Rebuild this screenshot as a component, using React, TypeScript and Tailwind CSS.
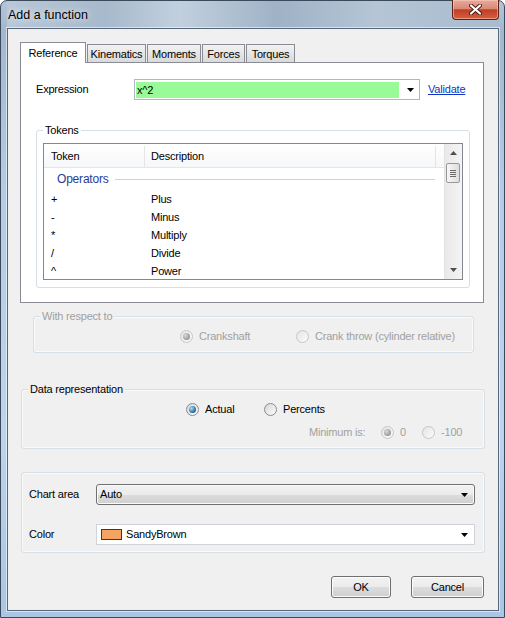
import React from "react";

const TABS = [
  { label: "Reference", w: "w-[66px]", active: true },
  { label: "Kinematics", w: "w-[59px]" },
  { label: "Moments", w: "w-[54px]" },
  { label: "Forces", w: "w-[43px]" },
  { label: "Torques", w: "w-[49px]" },
];

const OPERATORS = [
  { token: "+", desc: "Plus" },
  { token: "-", desc: "Minus" },
  { token: "*", desc: "Multiply" },
  { token: "/", desc: "Divide" },
  { token: "^", desc: "Power" },
];

function Radio({ checked, disabled }: { checked?: boolean; disabled?: boolean }) {
  return (
    <span
      className={`flex h-[13px] w-[13px] shrink-0 items-center justify-center rounded-full border ${
        disabled
          ? "border-[#c6c6c6] bg-[linear-gradient(135deg,#e4e4e4,#fbfbfb)]"
          : "border-[#8a8b8c] bg-[linear-gradient(135deg,#d6d6d6,#fdfdfd)]"
      }`}
    >
      {checked && (
        <span
          className={`h-[7px] w-[7px] rounded-full ${
            disabled
              ? "bg-[radial-gradient(circle_at_35%_35%,#d8d8d8,#7d7d7d)]"
              : "bg-[radial-gradient(circle_at_35%_35%,#a6e1fb,#1a5a91_75%)]"
          }`}
        />
      )}
    </span>
  );
}

function Arrow({ className = "fill-black" }: { className?: string }) {
  return (
    <svg width="7" height="4" viewBox="0 0 7 4" className={className}>
      <path d="M0 0h7L3.5 4z" />
    </svg>
  );
}

export default function App() {
  return (
    <div className="h-[618px] w-[505px] font-['Liberation_Sans',Arial,sans-serif] text-[11px] tracking-[-0.2px] text-black">
      {/* Window frame */}
      <div className="flex h-full w-full flex-col rounded-t-[7px] border border-[#3b4a5b] bg-[linear-gradient(to_bottom,#b4c5d7_0%,#a3b7cc_5%,#b3cbe4_30%,#bcd4ec_70%,#aac6e3_100%)] pl-[6px] pr-[5px] pb-[6px]">
        {/* Title bar */}
        <div className="flex h-[27px] shrink-0 items-start bg-[linear-gradient(to_right,#b9c8d8_0%,#a7b9cc_20%,#c2d0de_35%,#9fb2c6_55%,#b5c5d6_75%,#a9bbce_100%)]">
          <span className="ml-[1px] mt-[7px] text-[12.5px] leading-[15px] tracking-normal [text-shadow:0_0_6px_rgba(255,255,255,0.95)]">
            Add a function
          </span>
          <div className="-mt-px ml-auto flex h-[20px] w-[47px] items-center justify-center rounded-b-[4px] border border-t-0 border-[#5e2318] bg-[linear-gradient(to_bottom,#e8aa9c_0%,#d98a77_45%,#c23d25_52%,#d5613f_100%)] shadow-[inset_0_0_0_1px_rgba(255,210,200,0.5)]">
            <svg width="13" height="11" viewBox="0 0 13 11">
              <path d="M2 1.5l9 8M11 1.5l-9 8" stroke="#4a1a12" strokeWidth="4" strokeLinecap="round" />
              <path d="M2 1.5l9 8M11 1.5l-9 8" stroke="#ffffff" strokeWidth="2.2" strokeLinecap="round" />
            </svg>
          </div>
        </div>

        {/* Client area */}
        <div className="flex h-[583px] w-full flex-col border border-[#56677a] bg-[#f0f0f0] shadow-[0_0_0_1px_rgba(255,255,255,0.55)]">
          {/* Tab strip */}
          <div className="ml-[12px] mt-[13px] flex h-[21px] items-end gap-[1px]">
            {TABS.map((t) =>
              t.active ? (
                <div
                  key={t.label}
                  className={`relative z-10 flex h-[21px] ${t.w} items-center justify-center border border-b-0 border-[#898c95] bg-white`}
                >
                  {t.label}
                </div>
              ) : (
                <div
                  key={t.label}
                  className={`flex h-[19px] ${t.w} items-center justify-center border border-[#898c95] bg-[linear-gradient(to_bottom,#f2f2f2,#dadada)] pt-[1px]`}
                >
                  {t.label}
                </div>
              )
            )}
          </div>

          {/* Tab page */}
          <div className="-mt-px ml-[12px] flex h-[241px] w-[464px] flex-col border border-[#898c95] bg-white">
            {/* Expression row */}
            <div className="mt-[16px] flex h-[21px] items-center pl-[15px]">
              <span className="w-[98px]">Expression</span>
              <div className="flex h-[21px] w-[286px] border border-[#b2b6bf] bg-white">
                <div className="ml-[1px] mt-[2px] h-[16px] w-[263px] bg-[#98fb98] pl-[1px] leading-[16px]">x^2</div>
                <div className="flex flex-1 items-center justify-center pl-[2px]">
                  <Arrow />
                </div>
              </div>
              <span className="ml-[8px] text-[#1034c4] underline">Validate</span>
            </div>

            {/* Tokens group */}
            <div className="relative ml-[15px] mt-[30px] h-[158px] w-[434px] rounded-[3px] border border-[#d5dfe5]">
              <span className="absolute -top-[7px] left-[6px] bg-white px-[2px] leading-[13px]">Tokens</span>

              {/* List view */}
              <div className="ml-[6px] mt-[12px] flex h-[137px] w-[420px] border border-[#828790] bg-white">
                <div className="flex flex-1 flex-col overflow-hidden">
                  <div className="flex h-[24px] shrink-0 items-center border-b border-[#e5e5e5] bg-[linear-gradient(to_bottom,#ffffff,#f6f7f9)] pt-[2px]">
                    <div className="flex h-full w-[101px] items-center border-r border-[#e5e5e5] pl-[7px]">Token</div>
                    <div className="flex h-full w-[291px] items-center border-r border-[#e5e5e5] pl-[6px]">Description</div>
                  </div>
                  <div className="flex h-[22px] shrink-0 items-center pl-[13px] pr-[9px]">
                    <span className="text-[12px] text-[#1f3d98]">Operators</span>
                    <span className="ml-[6px] h-px flex-1 bg-[#c9d2e3]" />
                  </div>
                  {OPERATORS.map((op) => (
                    <div key={op.desc} className="flex h-[18px] shrink-0 items-center">
                      <span className="w-[100px] pl-[7px]">{op.token}</span>
                      <span className="pl-[7px]">{op.desc}</span>
                    </div>
                  ))}
                </div>

                {/* Scrollbar */}
                <div className="flex w-[18px] flex-col border-l border-[#e3e3e3] bg-[linear-gradient(to_right,#e9e9e9,#f4f4f4)]">
                  <div className="flex h-[18px] items-center justify-center">
                    <svg width="7" height="4" viewBox="0 0 7 4" className="fill-[#4f4f4f]">
                      <path d="M0 4h7L3.5 0z" />
                    </svg>
                  </div>
                  <div className="ml-[1px] mt-px flex h-[20px] w-[14px] flex-col items-center justify-center gap-[1px] rounded-[2px] border border-[#979797] bg-[linear-gradient(to_right,#f6f6f6,#dedede)]">
                    <span className="h-px w-[6px] bg-[#6b6b6b]" />
                    <span className="h-px w-[6px] bg-[#6b6b6b]" />
                    <span className="h-px w-[6px] bg-[#6b6b6b]" />
                    <span className="h-px w-[6px] bg-[#6b6b6b]" />
                  </div>
                  <div className="flex-1" />
                  <div className="flex h-[18px] items-center justify-center">
                    <Arrow className="fill-[#4f4f4f]" />
                  </div>
                </div>
              </div>
            </div>
          </div>

          {/* With respect to */}
          <div className="relative ml-[25px] mt-[13px] h-[37px] w-[441px] rounded-[3px] border border-[#d5dfe5] shadow-[inset_0_0_0_1px_#fafafa]">
            <span className="absolute -top-[7px] left-[6px] bg-[#f0f0f0] px-[2px] leading-[13px] text-[#a0a0a0]">With respect to</span>
            <div className="ml-[146px] mt-[13px] flex h-[13px] items-center text-[#a0a0a0]">
              <div className="flex w-[116px] items-center gap-[6px]">
                <Radio checked disabled />
                <span>Crankshaft</span>
              </div>
              <div className="flex items-center gap-[6px]">
                <Radio disabled />
                <span>Crank throw (cylinder relative)</span>
              </div>
            </div>
          </div>

          {/* Data representation */}
          <div className="relative ml-[13px] mt-[36px] h-[60px] w-[464px] rounded-[3px] border border-[#d5dfe5] shadow-[inset_0_0_0_1px_#fafafa]">
            <span className="absolute -top-[7px] left-[6px] bg-[#f0f0f0] px-[2px] leading-[13px]">Data representation</span>
            <div className="ml-[164px] mt-[13px] flex h-[13px] items-center">
              <div className="flex w-[78px] items-center gap-[6px]">
                <Radio checked />
                <span>Actual</span>
              </div>
              <div className="flex items-center gap-[6px]">
                <Radio />
                <span>Percents</span>
              </div>
            </div>
            <div className="ml-[287px] mt-[10px] flex h-[13px] items-center text-[#a0a0a0]">
              <span className="w-[72px]">Minimum is:</span>
              <div className="flex w-[41px] items-center gap-[6px]">
                <Radio checked disabled />
                <span>0</span>
              </div>
              <div className="flex items-center gap-[6px]">
                <Radio disabled />
                <span>-100</span>
              </div>
            </div>
          </div>

          {/* Chart settings */}
          <div className="ml-[13px] mt-[23px] h-[81px] w-[464px] rounded-[3px] border border-[#d5dfe5] shadow-[inset_0_0_0_1px_#fafafa]">
            <div className="mt-[11px] flex h-[21px] items-center pl-[7px]">
              <span className="w-[67px]">Chart area</span>
              <div className="flex h-[21px] w-[379px] items-center rounded-[3px] border border-[#707070] bg-[linear-gradient(to_bottom,#f2f2f2_0%,#ebebeb_50%,#dddddd_50%,#cfcfcf_100%)] pl-[3px] pr-[6px] shadow-[inset_0_0_0_1px_#fbfbfb]">
                <span className="flex-1">Auto</span>
                <Arrow />
              </div>
            </div>
            <div className="mt-[19px] flex h-[21px] items-center pl-[7px]">
              <span className="w-[67px]">Color</span>
              <div className="flex h-[21px] w-[379px] items-center border border-[#cfd3da] bg-white pl-[4px] pr-[6px]">
                <span className="h-[11px] w-[21px] border border-[#3a3a3a] bg-[#f4a460]" />
                <span className="ml-[4px] flex-1">SandyBrown</span>
                <Arrow />
              </div>
            </div>
          </div>

          {/* Buttons */}
          <div className="mt-[23px] flex justify-end gap-[20px] pr-[14px]">
            <button className="flex h-[22px] w-[60px] items-center justify-center rounded-[3px] border border-[#707070] bg-[linear-gradient(to_bottom,#f2f2f2_0%,#ebebeb_50%,#dddddd_50%,#cfcfcf_100%)] shadow-[inset_0_0_0_1px_#fbfbfb]">
              OK
            </button>
            <button className="flex h-[22px] w-[73px] items-center justify-center rounded-[3px] border border-[#707070] bg-[linear-gradient(to_bottom,#f2f2f2_0%,#ebebeb_50%,#dddddd_50%,#cfcfcf_100%)] shadow-[inset_0_0_0_1px_#fbfbfb]">
              Cancel
            </button>
          </div>
        </div>
      </div>
    </div>
  );
}
